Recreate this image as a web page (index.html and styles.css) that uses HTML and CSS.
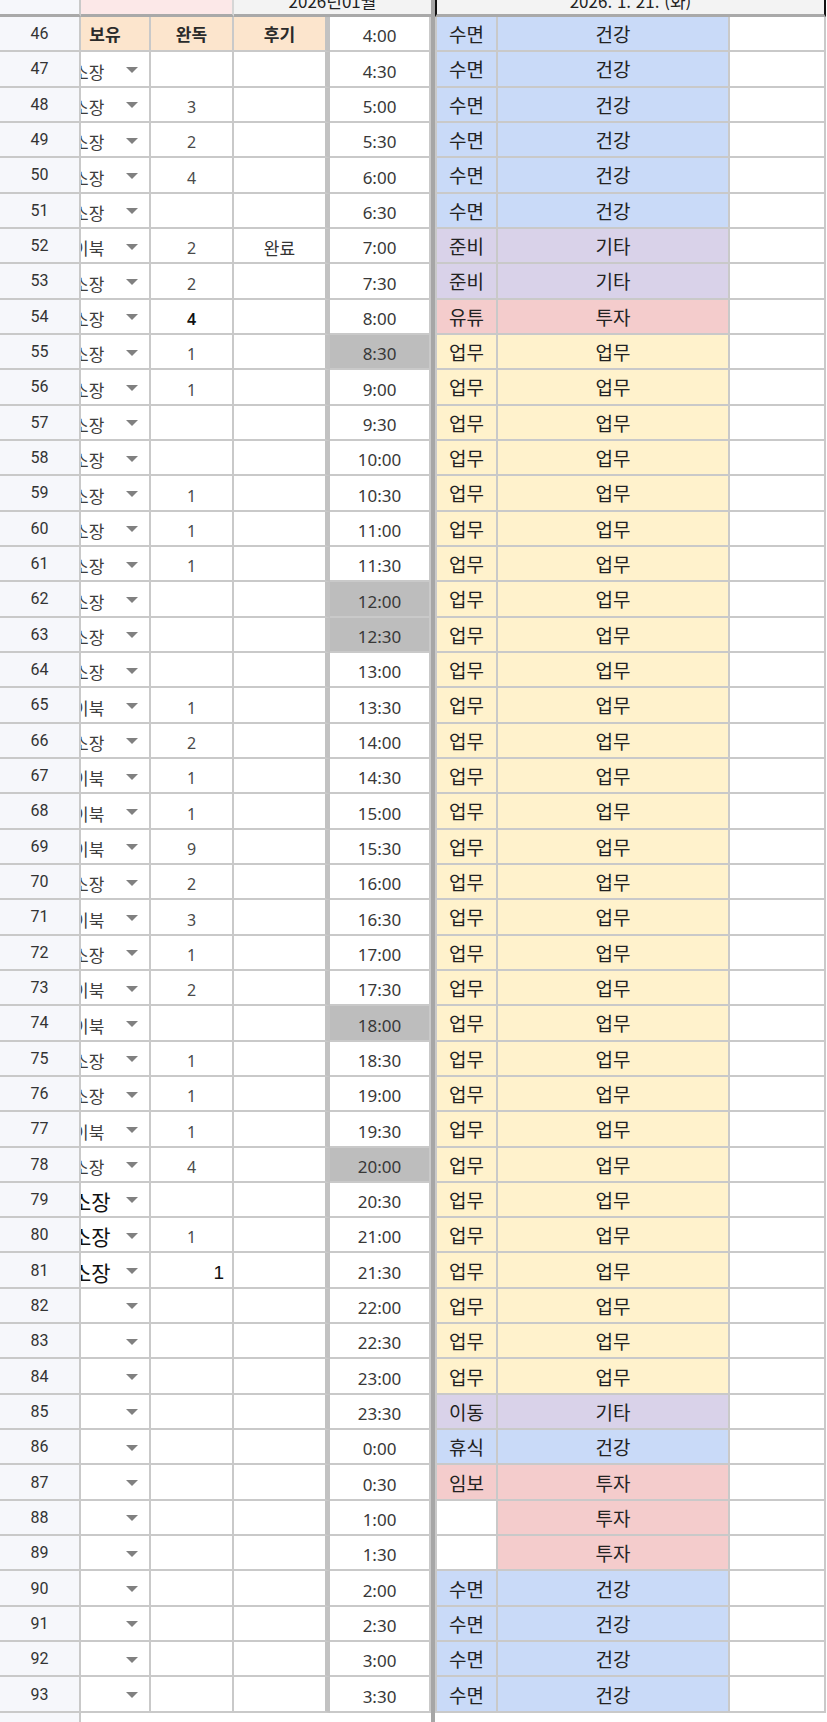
FILE: index.html
```html
<!DOCTYPE html>
<html lang="ko">
<head>
<meta charset="utf-8">
<title>시간 기록</title>
<link rel="stylesheet" href="styles.css">
</head>
<body>
<div class="sheet">
  <div class="row row-top">
    <div class="c-num"><span class="clip-text clip-num">1</span></div>
    <div class="top-pink"></div>
    <div class="top-gray"><span class="clip-text">2026년01월</span></div>
    <div class="c-sep"></div>
    <div class="top-date"><span class="clip-text">2026. 1. 21. (화)</span></div>
  </div>

  <div class="row"><div class="c-num">46</div><div class="c-own hd">보유</div><div class="c-done hd">완독</div><div class="c-note hd">후기</div><div class="c-time">4:00</div><div class="c-sep"></div><div class="c-cat t-health">수면</div><div class="c-grp t-health">건강</div><div class="c-extra"></div></div>
  <div class="row"><div class="c-num">47</div><div class="c-own"><span class="own-text">소장</span><span class="caret"></span></div><div class="c-done"></div><div class="c-note"></div><div class="c-time">4:30</div><div class="c-sep"></div><div class="c-cat t-health">수면</div><div class="c-grp t-health">건강</div><div class="c-extra"></div></div>
  <div class="row"><div class="c-num">48</div><div class="c-own"><span class="own-text">소장</span><span class="caret"></span></div><div class="c-done">3</div><div class="c-note"></div><div class="c-time">5:00</div><div class="c-sep"></div><div class="c-cat t-health">수면</div><div class="c-grp t-health">건강</div><div class="c-extra"></div></div>
  <div class="row"><div class="c-num">49</div><div class="c-own"><span class="own-text">소장</span><span class="caret"></span></div><div class="c-done">2</div><div class="c-note"></div><div class="c-time">5:30</div><div class="c-sep"></div><div class="c-cat t-health">수면</div><div class="c-grp t-health">건강</div><div class="c-extra"></div></div>
  <div class="row"><div class="c-num">50</div><div class="c-own"><span class="own-text">소장</span><span class="caret"></span></div><div class="c-done">4</div><div class="c-note"></div><div class="c-time">6:00</div><div class="c-sep"></div><div class="c-cat t-health">수면</div><div class="c-grp t-health">건강</div><div class="c-extra"></div></div>
  <div class="row"><div class="c-num">51</div><div class="c-own"><span class="own-text">소장</span><span class="caret"></span></div><div class="c-done"></div><div class="c-note"></div><div class="c-time">6:30</div><div class="c-sep"></div><div class="c-cat t-health">수면</div><div class="c-grp t-health">건강</div><div class="c-extra"></div></div>
  <div class="row"><div class="c-num">52</div><div class="c-own"><span class="own-text">이북</span><span class="caret"></span></div><div class="c-done">2</div><div class="c-note">완료</div><div class="c-time">7:00</div><div class="c-sep"></div><div class="c-cat t-misc">준비</div><div class="c-grp t-misc">기타</div><div class="c-extra"></div></div>
  <div class="row"><div class="c-num">53</div><div class="c-own"><span class="own-text">소장</span><span class="caret"></span></div><div class="c-done">2</div><div class="c-note"></div><div class="c-time">7:30</div><div class="c-sep"></div><div class="c-cat t-misc">준비</div><div class="c-grp t-misc">기타</div><div class="c-extra"></div></div>
  <div class="row"><div class="c-num">54</div><div class="c-own"><span class="own-text">소장</span><span class="caret"></span></div><div class="c-done is-dark">4</div><div class="c-note"></div><div class="c-time">8:00</div><div class="c-sep"></div><div class="c-cat t-invest">유튜</div><div class="c-grp t-invest">투자</div><div class="c-extra"></div></div>
  <div class="row"><div class="c-num">55</div><div class="c-own"><span class="own-text">소장</span><span class="caret"></span></div><div class="c-done">1</div><div class="c-note"></div><div class="c-time is-busy">8:30</div><div class="c-sep"></div><div class="c-cat t-work">업무</div><div class="c-grp t-work">업무</div><div class="c-extra"></div></div>
  <div class="row"><div class="c-num">56</div><div class="c-own"><span class="own-text">소장</span><span class="caret"></span></div><div class="c-done">1</div><div class="c-note"></div><div class="c-time">9:00</div><div class="c-sep"></div><div class="c-cat t-work">업무</div><div class="c-grp t-work">업무</div><div class="c-extra"></div></div>
  <div class="row"><div class="c-num">57</div><div class="c-own"><span class="own-text">소장</span><span class="caret"></span></div><div class="c-done"></div><div class="c-note"></div><div class="c-time">9:30</div><div class="c-sep"></div><div class="c-cat t-work">업무</div><div class="c-grp t-work">업무</div><div class="c-extra"></div></div>
  <div class="row"><div class="c-num">58</div><div class="c-own"><span class="own-text">소장</span><span class="caret"></span></div><div class="c-done"></div><div class="c-note"></div><div class="c-time">10:00</div><div class="c-sep"></div><div class="c-cat t-work">업무</div><div class="c-grp t-work">업무</div><div class="c-extra"></div></div>
  <div class="row"><div class="c-num">59</div><div class="c-own"><span class="own-text">소장</span><span class="caret"></span></div><div class="c-done">1</div><div class="c-note"></div><div class="c-time">10:30</div><div class="c-sep"></div><div class="c-cat t-work">업무</div><div class="c-grp t-work">업무</div><div class="c-extra"></div></div>
  <div class="row"><div class="c-num">60</div><div class="c-own"><span class="own-text">소장</span><span class="caret"></span></div><div class="c-done">1</div><div class="c-note"></div><div class="c-time">11:00</div><div class="c-sep"></div><div class="c-cat t-work">업무</div><div class="c-grp t-work">업무</div><div class="c-extra"></div></div>
  <div class="row"><div class="c-num">61</div><div class="c-own"><span class="own-text">소장</span><span class="caret"></span></div><div class="c-done">1</div><div class="c-note"></div><div class="c-time">11:30</div><div class="c-sep"></div><div class="c-cat t-work">업무</div><div class="c-grp t-work">업무</div><div class="c-extra"></div></div>
  <div class="row"><div class="c-num">62</div><div class="c-own"><span class="own-text">소장</span><span class="caret"></span></div><div class="c-done"></div><div class="c-note"></div><div class="c-time is-busy">12:00</div><div class="c-sep"></div><div class="c-cat t-work">업무</div><div class="c-grp t-work">업무</div><div class="c-extra"></div></div>
  <div class="row"><div class="c-num">63</div><div class="c-own"><span class="own-text">소장</span><span class="caret"></span></div><div class="c-done"></div><div class="c-note"></div><div class="c-time is-busy">12:30</div><div class="c-sep"></div><div class="c-cat t-work">업무</div><div class="c-grp t-work">업무</div><div class="c-extra"></div></div>
  <div class="row"><div class="c-num">64</div><div class="c-own"><span class="own-text">소장</span><span class="caret"></span></div><div class="c-done"></div><div class="c-note"></div><div class="c-time">13:00</div><div class="c-sep"></div><div class="c-cat t-work">업무</div><div class="c-grp t-work">업무</div><div class="c-extra"></div></div>
  <div class="row"><div class="c-num">65</div><div class="c-own"><span class="own-text">이북</span><span class="caret"></span></div><div class="c-done">1</div><div class="c-note"></div><div class="c-time">13:30</div><div class="c-sep"></div><div class="c-cat t-work">업무</div><div class="c-grp t-work">업무</div><div class="c-extra"></div></div>
  <div class="row"><div class="c-num">66</div><div class="c-own"><span class="own-text">소장</span><span class="caret"></span></div><div class="c-done">2</div><div class="c-note"></div><div class="c-time">14:00</div><div class="c-sep"></div><div class="c-cat t-work">업무</div><div class="c-grp t-work">업무</div><div class="c-extra"></div></div>
  <div class="row"><div class="c-num">67</div><div class="c-own"><span class="own-text">이북</span><span class="caret"></span></div><div class="c-done">1</div><div class="c-note"></div><div class="c-time">14:30</div><div class="c-sep"></div><div class="c-cat t-work">업무</div><div class="c-grp t-work">업무</div><div class="c-extra"></div></div>
  <div class="row"><div class="c-num">68</div><div class="c-own"><span class="own-text">이북</span><span class="caret"></span></div><div class="c-done">1</div><div class="c-note"></div><div class="c-time">15:00</div><div class="c-sep"></div><div class="c-cat t-work">업무</div><div class="c-grp t-work">업무</div><div class="c-extra"></div></div>
  <div class="row"><div class="c-num">69</div><div class="c-own"><span class="own-text">이북</span><span class="caret"></span></div><div class="c-done">9</div><div class="c-note"></div><div class="c-time">15:30</div><div class="c-sep"></div><div class="c-cat t-work">업무</div><div class="c-grp t-work">업무</div><div class="c-extra"></div></div>
  <div class="row"><div class="c-num">70</div><div class="c-own"><span class="own-text">소장</span><span class="caret"></span></div><div class="c-done">2</div><div class="c-note"></div><div class="c-time">16:00</div><div class="c-sep"></div><div class="c-cat t-work">업무</div><div class="c-grp t-work">업무</div><div class="c-extra"></div></div>
  <div class="row"><div class="c-num">71</div><div class="c-own"><span class="own-text">이북</span><span class="caret"></span></div><div class="c-done">3</div><div class="c-note"></div><div class="c-time">16:30</div><div class="c-sep"></div><div class="c-cat t-work">업무</div><div class="c-grp t-work">업무</div><div class="c-extra"></div></div>
  <div class="row"><div class="c-num">72</div><div class="c-own"><span class="own-text">소장</span><span class="caret"></span></div><div class="c-done">1</div><div class="c-note"></div><div class="c-time">17:00</div><div class="c-sep"></div><div class="c-cat t-work">업무</div><div class="c-grp t-work">업무</div><div class="c-extra"></div></div>
  <div class="row"><div class="c-num">73</div><div class="c-own"><span class="own-text">이북</span><span class="caret"></span></div><div class="c-done">2</div><div class="c-note"></div><div class="c-time">17:30</div><div class="c-sep"></div><div class="c-cat t-work">업무</div><div class="c-grp t-work">업무</div><div class="c-extra"></div></div>
  <div class="row"><div class="c-num">74</div><div class="c-own"><span class="own-text">이북</span><span class="caret"></span></div><div class="c-done"></div><div class="c-note"></div><div class="c-time is-busy">18:00</div><div class="c-sep"></div><div class="c-cat t-work">업무</div><div class="c-grp t-work">업무</div><div class="c-extra"></div></div>
  <div class="row"><div class="c-num">75</div><div class="c-own"><span class="own-text">소장</span><span class="caret"></span></div><div class="c-done">1</div><div class="c-note"></div><div class="c-time">18:30</div><div class="c-sep"></div><div class="c-cat t-work">업무</div><div class="c-grp t-work">업무</div><div class="c-extra"></div></div>
  <div class="row"><div class="c-num">76</div><div class="c-own"><span class="own-text">소장</span><span class="caret"></span></div><div class="c-done">1</div><div class="c-note"></div><div class="c-time">19:00</div><div class="c-sep"></div><div class="c-cat t-work">업무</div><div class="c-grp t-work">업무</div><div class="c-extra"></div></div>
  <div class="row"><div class="c-num">77</div><div class="c-own"><span class="own-text">이북</span><span class="caret"></span></div><div class="c-done">1</div><div class="c-note"></div><div class="c-time">19:30</div><div class="c-sep"></div><div class="c-cat t-work">업무</div><div class="c-grp t-work">업무</div><div class="c-extra"></div></div>
  <div class="row"><div class="c-num">78</div><div class="c-own"><span class="own-text">소장</span><span class="caret"></span></div><div class="c-done">4</div><div class="c-note"></div><div class="c-time is-busy">20:00</div><div class="c-sep"></div><div class="c-cat t-work">업무</div><div class="c-grp t-work">업무</div><div class="c-extra"></div></div>
  <div class="row"><div class="c-num">79</div><div class="c-own"><span class="own-text is-big">소장</span><span class="caret"></span></div><div class="c-done"></div><div class="c-note"></div><div class="c-time">20:30</div><div class="c-sep"></div><div class="c-cat t-work">업무</div><div class="c-grp t-work">업무</div><div class="c-extra"></div></div>
  <div class="row"><div class="c-num">80</div><div class="c-own"><span class="own-text is-big">소장</span><span class="caret"></span></div><div class="c-done">1</div><div class="c-note"></div><div class="c-time">21:00</div><div class="c-sep"></div><div class="c-cat t-work">업무</div><div class="c-grp t-work">업무</div><div class="c-extra"></div></div>
  <div class="row"><div class="c-num">81</div><div class="c-own"><span class="own-text is-big">소장</span><span class="caret"></span></div><div class="c-done is-value">1</div><div class="c-note"></div><div class="c-time">21:30</div><div class="c-sep"></div><div class="c-cat t-work">업무</div><div class="c-grp t-work">업무</div><div class="c-extra"></div></div>
  <div class="row"><div class="c-num">82</div><div class="c-own"><span class="caret"></span></div><div class="c-done"></div><div class="c-note"></div><div class="c-time">22:00</div><div class="c-sep"></div><div class="c-cat t-work">업무</div><div class="c-grp t-work">업무</div><div class="c-extra"></div></div>
  <div class="row"><div class="c-num">83</div><div class="c-own"><span class="caret"></span></div><div class="c-done"></div><div class="c-note"></div><div class="c-time">22:30</div><div class="c-sep"></div><div class="c-cat t-work">업무</div><div class="c-grp t-work">업무</div><div class="c-extra"></div></div>
  <div class="row"><div class="c-num">84</div><div class="c-own"><span class="caret"></span></div><div class="c-done"></div><div class="c-note"></div><div class="c-time">23:00</div><div class="c-sep"></div><div class="c-cat t-work">업무</div><div class="c-grp t-work">업무</div><div class="c-extra"></div></div>
  <div class="row"><div class="c-num">85</div><div class="c-own"><span class="caret"></span></div><div class="c-done"></div><div class="c-note"></div><div class="c-time">23:30</div><div class="c-sep"></div><div class="c-cat t-misc">이동</div><div class="c-grp t-misc">기타</div><div class="c-extra"></div></div>
  <div class="row"><div class="c-num">86</div><div class="c-own"><span class="caret"></span></div><div class="c-done"></div><div class="c-note"></div><div class="c-time">0:00</div><div class="c-sep"></div><div class="c-cat t-health">휴식</div><div class="c-grp t-health">건강</div><div class="c-extra"></div></div>
  <div class="row"><div class="c-num">87</div><div class="c-own"><span class="caret"></span></div><div class="c-done"></div><div class="c-note"></div><div class="c-time">0:30</div><div class="c-sep"></div><div class="c-cat t-invest">임보</div><div class="c-grp t-invest">투자</div><div class="c-extra"></div></div>
  <div class="row"><div class="c-num">88</div><div class="c-own"><span class="caret"></span></div><div class="c-done"></div><div class="c-note"></div><div class="c-time">1:00</div><div class="c-sep"></div><div class="c-cat"></div><div class="c-grp t-invest">투자</div><div class="c-extra"></div></div>
  <div class="row"><div class="c-num">89</div><div class="c-own"><span class="caret"></span></div><div class="c-done"></div><div class="c-note"></div><div class="c-time">1:30</div><div class="c-sep"></div><div class="c-cat"></div><div class="c-grp t-invest">투자</div><div class="c-extra"></div></div>
  <div class="row"><div class="c-num">90</div><div class="c-own"><span class="caret"></span></div><div class="c-done"></div><div class="c-note"></div><div class="c-time">2:00</div><div class="c-sep"></div><div class="c-cat t-health">수면</div><div class="c-grp t-health">건강</div><div class="c-extra"></div></div>
  <div class="row"><div class="c-num">91</div><div class="c-own"><span class="caret"></span></div><div class="c-done"></div><div class="c-note"></div><div class="c-time">2:30</div><div class="c-sep"></div><div class="c-cat t-health">수면</div><div class="c-grp t-health">건강</div><div class="c-extra"></div></div>
  <div class="row"><div class="c-num">92</div><div class="c-own"><span class="caret"></span></div><div class="c-done"></div><div class="c-note"></div><div class="c-time">3:00</div><div class="c-sep"></div><div class="c-cat t-health">수면</div><div class="c-grp t-health">건강</div><div class="c-extra"></div></div>
  <div class="row"><div class="c-num">93</div><div class="c-own"><span class="caret"></span></div><div class="c-done"></div><div class="c-note"></div><div class="c-time">3:30</div><div class="c-sep"></div><div class="c-cat t-health">수면</div><div class="c-grp t-health">건강</div><div class="c-extra"></div></div>

  <div class="row row-end">
    <div class="c-num"></div>
    <div class="end-blank"></div>
    <div class="c-sep"></div>
  </div>
</div>
</body>
</html>
```

FILE: styles.css
```css
* { box-sizing: border-box; }

html, body {
  margin: 0;
  padding: 0;
  background: #ffffff;
}

body {
  width: 827px;
  overflow: hidden;
  font-family: "Noto Sans CJK KR", "Noto Sans", sans-serif;
  color: #222222;
}

.sheet {
  width: 827px;
}

.row {
  display: grid;
  grid-template-columns: 81px 70px 83px 96px 101px 4px 63px 232px 96px;
  height: 35.33px;
}

.row > div {
  min-width: 0;
  overflow: hidden;
  border-bottom: 2px solid #c9c9c9;
}

/* row number column */
.c-num {
  background: #f6f7fb;
  border-right: 2px solid #c9c9c9;
  display: flex;
  align-items: center;
  justify-content: center;
  font-family: Roboto, "Noto Sans", sans-serif;
  font-size: 16px;
  color: #333333;
}

/* 보유 column with dropdown */
.c-own {
  border-right: 2px solid #c9c9c9;
  display: flex;
  align-items: flex-end;
  padding-bottom: 2px;
}

.own-text {
  margin-left: -8px;
  font-size: 17px;
  line-height: 24px;
  color: #3d3d3d;
  white-space: nowrap;
}

.own-text.is-big {
  margin-left: -9px;
  font-size: 21px;
  line-height: 26px;
  color: #111111;
}

.caret {
  margin-left: auto;
  margin-right: 11px;
  margin-top: 4px;
  align-self: center;
  width: 0;
  height: 0;
  border-left: 6px solid transparent;
  border-right: 6px solid transparent;
  border-top: 6px solid #808080;
}

/* 완독 / 후기 */
.c-done,
.c-note {
  display: flex;
  align-items: flex-end;
  justify-content: center;
  padding-bottom: 2px;
  font-family: "Noto Sans", "Noto Sans CJK KR", sans-serif;
  font-size: 16px;
  line-height: 24px;
  color: #4a4a4a;
}

.c-done {
  border-right: 2px solid #c9c9c9;
}

.c-note {
  border-right: 5px solid #c2c2c2;
  font-family: "Noto Sans CJK KR", sans-serif;
  font-size: 17px;
  color: #333333;
}

.c-done.is-dark {
  color: #111111;
  font-weight: 600;
}

.c-done.is-value {
  justify-content: flex-end;
  padding-right: 8px;
  font-family: "Liberation Sans", Arial, sans-serif;
  font-size: 19px;
  color: #111111;
}

/* header labels */
.hd {
  background: #fce5cd;
  align-items: center;
  justify-content: center;
  font-family: "Noto Sans CJK KR", sans-serif;
  font-weight: 700;
  font-size: 17px;
  color: #2a2a2a;
  padding-bottom: 0;
}

.c-own.hd {
  padding-right: 20px;
}

/* time column */
.c-time {
  border-right: 2px solid #c9c9c9;
  display: flex;
  align-items: flex-end;
  justify-content: center;
  padding-bottom: 2px;
  font-family: "Noto Sans", sans-serif;
  font-size: 17px;
  line-height: 24px;
  color: #383838;
}

.c-time.is-busy {
  background: #bdbdbd;
}

/* frozen separator */
.row > .c-sep {
  background: #a6a6a6;
  border-bottom-color: #a6a6a6;
}

/* category columns */
.c-cat {
  border-left: 2px solid #c9c9c9;
  border-right: 2px solid #c9c9c9;
  display: flex;
  align-items: center;
  justify-content: center;
  font-size: 19px;
  color: #222222;
}

.c-grp {
  border-right: 2px solid #c9c9c9;
  display: flex;
  align-items: center;
  justify-content: center;
  font-size: 19px;
  color: #222222;
}

.c-extra {
  border-right: 2px solid #c9c9c9;
}

.t-health { background: #c9daf8; }
.t-misc { background: #d9d2e9; }
.t-invest { background: #f4cccc; }
.t-work { background: #fff2cc; }

/* top (frozen) header row */
.row-top {
  height: 17px;
}

.row-top > div {
  border-bottom: 3px solid #a9a9a9;
  display: flex;
  justify-content: center;
  align-items: flex-start;
}

.clip-text {
  display: block;
  margin-top: -9px;
  font-size: 17px;
  line-height: 20px;
  white-space: nowrap;
  color: #222222;
}

.clip-num {
  margin-top: -15px;
  font-family: Roboto, sans-serif;
  font-size: 16px;
}

.top-pink {
  grid-column: span 2;
  background: #fce8e8;
  border-right: 2px solid #d6d6d6;
}

.top-gray {
  grid-column: span 2;
  background: #f3f3f3;
}

.row-top > .c-sep {
  border-bottom-color: #a6a6a6;
}

.top-date {
  grid-column: span 3;
  background: #f3f3f3;
  border-left: 2px solid #111111;
  border-right: 2px solid #111111;
}

/* trailing partial row */
.row-end {
  height: 9px;
}

.row-end > div {
  border-bottom: none;
}

.end-blank {
  grid-column: span 4;
}
```
